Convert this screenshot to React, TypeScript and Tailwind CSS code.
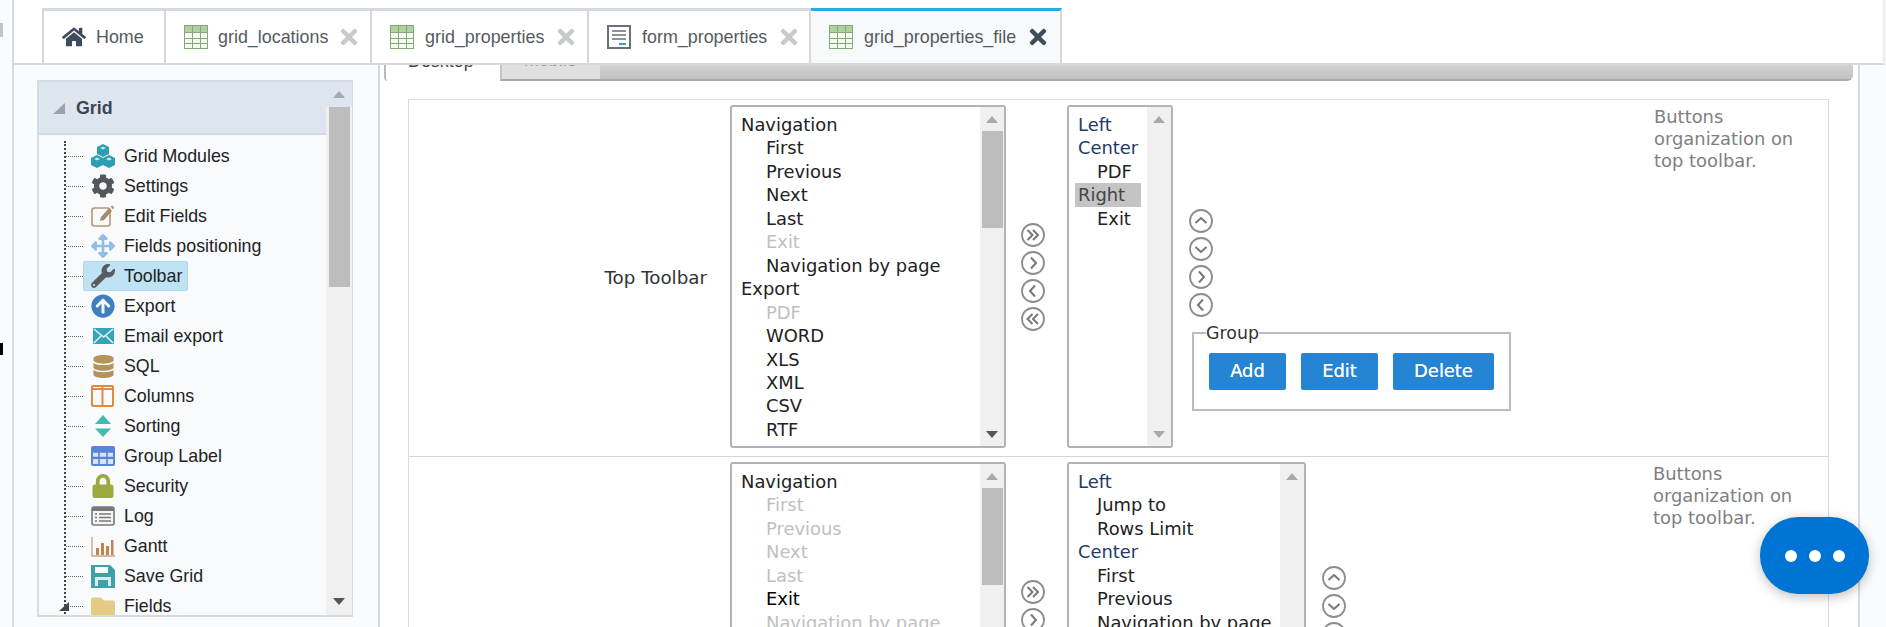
import type { ReactNode } from "react";
import {
  FaArrowCircleUp,
  FaArrowsAlt,
  FaCog,
  FaDatabase,
  FaFolder,
  FaHome,
  FaLock,
  FaTimes,
  FaWrench,
} from "react-icons/fa";

const TABLE_ICON = (
  <svg width="24" height="24" viewBox="0 0 24 24">
    <rect x="0.5" y="0.5" width="23" height="23" fill="#f6fbef" stroke="#86a97c" />
    <rect x="1" y="1" width="22" height="6" fill="#b2d09f" />
    <path d="M0 7.5h24M0 13.5h24M0 18.5h24M8.5 0v24M16.5 0v24" stroke="#86a97c" strokeWidth="1" fill="none" />
  </svg>
);

const FORM_ICON = (
  <svg width="24" height="24" viewBox="0 0 24 24">
    <rect x="1" y="1" width="22" height="22" fill="#fff" stroke="#6b7078" strokeWidth="2" />
    <path d="M5 6h14M5 10h14M5 14h14" stroke="#6b7078" strokeWidth="1.6" />
    <path d="M12 19h7" stroke="#3a9fc0" strokeWidth="2" />
  </svg>
);

const TREE_ICONS: Record<string, ReactNode> = {
  modules: (
    <svg width="24" height="24" viewBox="0 0 24 24">
      <path d="M12 0l6 3v7l-6 3-6-3V3z" fill="#2f9db1" />
      <path d="M6 11l6 3v7l-6 3-6-3v-7z" fill="#2f9db1" />
      <path d="M18 11l6 3v7l-6 3-6-3v-7z" fill="#2f9db1" />
      <path d="M12 2.5l3 1.5-3 1.5L9 4zM6 13.5l3 1.5-3 1.5L3 15zM18 13.5l3 1.5-3 1.5-3-1.5z" fill="#c5e6ea" />
    </svg>
  ),
  settings: <FaCog size={24} color="#54575b" />,
  edit: (
    <svg width="24" height="24" viewBox="0 0 24 24">
      <rect x="1" y="4" width="18" height="18" rx="2.5" fill="none" stroke="#b39672" strokeWidth="1.6" />
      <path d="M9 17l1-4 8-9 3 3-8 9z" fill="#a78a66" />
      <path d="M19.5 2.5l2-1 1.5 2-1 2z" fill="#d08a57" />
    </svg>
  ),
  move: <FaArrowsAlt size={24} color="#8fbde6" />,
  wrench: <FaWrench size={24} color="#595c61" />,
  export: <FaArrowCircleUp size={24} color="#3e7fbf" />,
  email: (
    <svg width="24" height="24" viewBox="0 0 24 24">
      <rect x="2" y="4" width="21" height="16" fill="#36a3b9" />
      <path d="M3 5l9.500 8L22 5M3 19l7-7M22 19l-7-7" stroke="#dff2f5" strokeWidth="1.5" fill="none" />
    </svg>
  ),
  sql: <FaDatabase size={23} color="#b2955b" />,
  columns: (
    <svg width="24" height="24" viewBox="0 0 24 24">
      <rect x="1" y="2" width="21" height="20" rx="1" fill="none" stroke="#e48a3f" strokeWidth="2" />
      <path d="M1 5h21" stroke="#e48a3f" strokeWidth="2" />
      <path d="M11.500 2v20" stroke="#e48a3f" strokeWidth="2" />
    </svg>
  ),
  sorting: (
    <svg width="24" height="24" viewBox="0 0 24 24">
      <path d="M12 1l8 9H4z" fill="#43bab0" />
      <path d="M12 23l8-8.500H4z" fill="#43bab0" />
    </svg>
  ),
  group: (
    <svg width="24" height="24" viewBox="0 0 24 24">
      <rect x="0" y="2" width="24" height="20" rx="2" fill="#5a82d8" />
      <path d="M2 8h20v5H2zM2 15h20v5H2z" fill="#d8e3f8" />
      <path d="M8 8v12M16 8v12M2 13.500h20M2 8h20" stroke="#5a82d8" strokeWidth="1.600" />
    </svg>
  ),
  lock: <FaLock size={24} color="#9ba93e" />,
  log: (
    <svg width="24" height="24" viewBox="0 0 24 24">
      <rect x="1" y="3" width="22" height="18" rx="2" fill="#f5f5f5" stroke="#77787b" strokeWidth="1.600" />
      <rect x="1" y="3" width="22" height="4" fill="#77787b" />
      <path d="M4 10h2M8 10h12M4 13.500h2M8 13.500h12M4 17h2M8 17h12" stroke="#77787b" strokeWidth="1.300" />
    </svg>
  ),
  gantt: (
    <svg width="24" height="24" viewBox="0 0 24 24">
      <path d="M1 3v19h23" fill="none" stroke="#c9a27e" strokeWidth="1.300" />
      <path d="M5 14h3v7H5zM10 9h3v12h-3zM15 12h3v9h-3zM20 6h2.500v15H20z" fill="#c0834d" />
    </svg>
  ),
  save: (
    <svg width="24" height="24" viewBox="0 0 24 24">
      <path d="M0 1h19l5 5v18H0z" fill="#3fa0a9" />
      <path d="M4 3h13v6H4z" fill="#f5fbfb" />
      <path d="M4 13h16v9H4z" fill="#d7edf0" />
      <path d="M7 16h10v6H7z" fill="#3fa0a9" />
    </svg>
  ),
  folder: <FaFolder size={25} color="#e4cb85" />,
};

const TREE = [
  { label: "Grid Modules", icon: "modules" },
  { label: "Settings", icon: "settings" },
  { label: "Edit Fields", icon: "edit" },
  { label: "Fields positioning", icon: "move" },
  { label: "Toolbar", icon: "wrench", selected: true },
  { label: "Export", icon: "export" },
  { label: "Email export", icon: "email" },
  { label: "SQL", icon: "sql" },
  { label: "Columns", icon: "columns" },
  { label: "Sorting", icon: "sorting" },
  { label: "Group Label", icon: "group" },
  { label: "Security", icon: "lock" },
  { label: "Log", icon: "log" },
  { label: "Gantt", icon: "gantt" },
  { label: "Save Grid", icon: "save" },
  { label: "Fields", icon: "folder" },
];

type Item = { text: string; sub?: boolean; off?: boolean; strong?: boolean };
const sub = (text: string, off = false, strong = false): Item => ({ text, sub: true, off, strong });

const TOP_AVAILABLE: Item[] = [
  { text: "Navigation" },
  sub("First"),
  sub("Previous"),
  sub("Next"),
  sub("Last"),
  sub("Exit", true),
  sub("Navigation by page"),
  { text: "Export" },
  sub("PDF", true),
  sub("WORD"),
  sub("XLS"),
  sub("XML"),
  sub("CSV"),
  sub("RTF"),
];

const BOTTOM_AVAILABLE: Item[] = [
  { text: "Navigation" },
  sub("First", true),
  sub("Previous", true),
  sub("Next", true),
  sub("Last", true),
  sub("Exit", false, true),
  sub("Navigation by page", true),
];

function Arrow({ dir, color = "#a0a4a8" }: { dir: "up" | "down"; color?: string }) {
  return (
    <svg width="12" height="7" viewBox="0 0 12 7">
      <path d={dir === "up" ? "M6 0l6 7H0z" : "M0 0h12L6 7z"} fill={color} />
    </svg>
  );
}

function ListBox({ width, items, thumb, children }: {
  width: string;
  items?: Item[];
  thumb?: boolean;
  children?: ReactNode;
}) {
  return (
    <div className={`${width} h-[343px] shrink-0 flex rounded-[3px] border-2 border-[#b0b4ba] bg-white overflow-hidden`}>
      <div className="flex-1 pt-[6px] pl-[9px] text-[17.9px] leading-[23.45px] text-[#222] whitespace-nowrap overflow-hidden">
        {items?.map((it) => (
          <div key={it.text} className={`${it.sub ? "pl-[25px]" : ""} ${it.off ? "text-[#c0c0c0]" : ""} ${it.strong ? "text-black" : ""}`}>
            {it.text}
          </div>
        ))}
        {children}
      </div>
      <div className="w-[24px] shrink-0 bg-[#f0f0f0] flex flex-col items-center">
        <div className="h-[24px] flex items-center justify-center"><Arrow dir="up" color="#a9a9a9" /></div>
        <div className="flex-1 w-[21px]">
          {thumb && <div className="h-[97px] bg-[#bdbdbd]" />}
        </div>
        <div className="h-[24px] flex items-center justify-center"><Arrow dir="down" color={thumb ? "#555" : "#a9a9a9"} /></div>
      </div>
    </div>
  );
}

const CHEVRONS = {
  up: "M6.500 14l5.500-5 5.500 5",
  down: "M6.500 10l5.500 5 5.500-5",
  right: "M10 6.500l5 5.500-5 5.500",
  left: "M14 6.500l-5 5.500 5 5.500",
  rightAll: "M6.500 7l5 5-5 5M12 7l5 5-5 5",
  leftAll: "M11.500 7l-5 5 5 5M17 7l-5 5 5 5",
};

function RoundButton({ kind }: { kind: keyof typeof CHEVRONS }) {
  return (
    <svg width="24" height="24" viewBox="0 0 24 24" className="block">
      <circle cx="12" cy="12" r="11" fill="#fff" stroke="#8c8c8c" strokeWidth="1.800" />
      <path d={CHEVRONS[kind]} fill="none" stroke="#777" strokeWidth="2" />
    </svg>
  );
}

function TransferButtons() {
  return (
    <div className="ml-[15px] mr-[22px] mt-[118px] flex flex-col gap-[4px] shrink-0">
      <RoundButton kind="rightAll" />
      <RoundButton kind="right" />
      <RoundButton kind="left" />
      <RoundButton kind="leftAll" />
    </div>
  );
}

function OrderButtons() {
  return (
    <div className="flex flex-col gap-[4px] w-[24px]">
      <RoundButton kind="up" />
      <RoundButton kind="down" />
      <RoundButton kind="right" />
      <RoundButton kind="left" />
    </div>
  );
}

function Help() {
  return (
    <div className="w-[150px] shrink-0 mt-[1px] text-[#808080] text-[17.9px] leading-[22px]">
      Buttons organization on top toolbar.
    </div>
  );
}

function Tab({ icon, label, w, active, closable = true, gap = "gap-[11px]" }: {
  icon: ReactNode;
  label: string;
  w: string;
  active?: boolean;
  closable?: boolean;
  gap?: string;
}) {
  return (
    <div className={`${w} h-full shrink-0 flex items-center pl-[18px] ${gap} border-t-[3px] border-r-2 ${active ? "border-t-[#29abe2] border-r-[#d5d9de] bg-[#f7f9fb]" : "border-t-[#d5d9de] border-r-[#d5d9de]"}`}>
      {icon}
      <span className="text-[17.9px] text-[#555a60] whitespace-nowrap">{label}</span>
      {closable && <FaTimes size={24} color={active ? "#3e4c5c" : "#c6cacd"} className="-ml-[1px]" />}
    </div>
  );
}

export default function App() {
  return (
    <div className="relative w-[1886px] h-[627px] overflow-hidden flex bg-[#f9fbfd] font-['Liberation_Sans',Arial,sans-serif]">
      {/* collapsed side menu */}
      <div className="w-[14px] shrink-0 border-r-2 border-[#d5dbe2] flex flex-col">
        <div className="mt-[23px] h-[14px] w-[3px] bg-[#c4c4c4]" />
        <div className="mt-[306px] h-[12px] w-[3px] bg-black" />
      </div>

      <div className="flex-1 min-w-0 flex flex-col">
        <div className="h-[65px] shrink-0 bg-white border-b-2 border-[#d5d9de] pt-[8px] pl-[28px] mr-[1px] border-r-2 border-r-[#eceef0] flex">
          <div className="flex h-[55px] border-l-2 border-[#d5d9de]">
            <Tab icon={<FaHome size={24} color="#3e4c5c" />} label="Home" w="w-[122px]" closable={false} gap="gap-[10px]" />
            <Tab icon={TABLE_ICON} label="grid_locations" w="w-[206px]" gap="gap-[10px]" />
            <Tab icon={TABLE_ICON} label="grid_properties" w="w-[217px]" />
            <Tab icon={FORM_ICON} label="form_properties" w="w-[222px]" />
            <Tab icon={TABLE_ICON} label="grid_properties_file" w="w-[251px]" active />
          </div>
        </div>

        <div className="flex-1 min-h-0 flex">
          {/* application tree */}
          <div className="w-[364px] shrink-0 pl-[23px] pt-[15px]">
            <div className="relative w-[316px] h-[537px] flex border-l-2 border-y-2 border-r border-[#d5dbe2] overflow-hidden">
              <div className="flex-1 bg-[#f8fafc] flex flex-col">
                <div className="h-[53px] shrink-0 bg-[#dde5ee] border-b-2 border-[#d0dae4] flex items-center pl-[14px] pt-[2px]">
                  <svg width="12" height="11" viewBox="0 0 12 11"><path d="M12 0v11H0z" fill="#97a3b0" /></svg>
                  <span className="ml-[11px] text-[17.8px] font-bold text-[#3a4654]">Grid</span>
                </div>
                <div className="ml-[25px] mt-[6px] flex-1 border-l-2 border-dotted border-[#444]">
                  {TREE.map((row) => (
                    <div key={row.label} className="h-[30px] flex items-center">
                      <div className="w-[17px] border-t border-dotted border-[#666] shrink-0" />
                      <div className={`flex items-center h-[30px] rounded-[2px] border pl-[7px] pr-[5px] gap-[9px] ${row.selected ? "bg-[#bfe3f5] border-[#aed6ea]" : "border-transparent"}`}>
                        <span className="w-[24px] h-[24px] flex items-center justify-center shrink-0">{TREE_ICONS[row.icon]}</span>
                        <span className="text-[17.8px] text-[#222] whitespace-nowrap">{row.label}</span>
                      </div>
                    </div>
                  ))}
                </div>
              </div>
              <div className="w-[26px] shrink-0 bg-[#f0f0f0] flex flex-col items-start">
                <div className="h-[25px] bg-[#dde5ee] w-full flex items-center justify-center"><Arrow dir="up" color="#a5a9ad" /></div>
                <div className="ml-[3px] w-[21px] h-[180px] bg-[#bdbdbd]" />
                <div className="mt-auto mb-[10px] self-center"><Arrow dir="down" color="#555" /></div>
              </div>
              <svg width="10" height="9" viewBox="0 0 10 9" className="absolute left-[20px] bottom-[4px]"><path d="M10 0v9H0z" fill="#444" /></svg>
            </div>
          </div>

          {/* toolbar settings */}
          <div className="w-[1482px] shrink-0 bg-white border-x-2 border-[#d5dbe2] flex flex-col overflow-hidden">
            <div className="h-[16px] shrink-0 ml-[4px] mr-[5px] flex rounded-br-[6px] overflow-hidden">
              <div className="w-[116px] bg-white border-l-2 border-[#b9b9b9] rounded-bl-[4px] pl-[22px] overflow-hidden">
                <div className="-mt-[15px] text-[17.9px] leading-[22px] text-[#444]">Desktop</div>
              </div>
              <div className="w-[100px] bg-[#e0e0e0] border-l-2 border-b-2 border-l-[#c4c4c4] border-b-[#a9a9a9] pl-[22px] overflow-hidden">
                <div className="-mt-[16px] text-[17.9px] leading-[22px] text-[#9a9a9a]">Mobile</div>
              </div>
              <div className="flex-1 bg-linear-to-b from-[#d2d2d2] to-[#c2c2c2] border-b-2 border-[#a9a9a9]" />
            </div>

            <div className="ml-[28px] mt-[18px] w-[1421px] border border-[#dcdcdc] shrink-0 font-['DejaVu_Sans',Verdana,sans-serif]">
              <div className="flex pt-[5px] pb-[8px] border-b border-[#d5d5d5]">
                <div className="w-[298px] shrink-0 mr-[22px] mt-[162px] text-right text-[#333] text-[18.3px] leading-[22px]">Top Toolbar</div>
                <div className="w-px shrink-0" />
                <ListBox width="w-[276px]" items={TOP_AVAILABLE} thumb />
                <TransferButtons />
                <ListBox width="w-[106px]">
                  <div className="text-[#1f3a68]">Left</div>
                  <div className="text-[#1f3a68]">Center</div>
                  <div className="pl-[19px] text-[#222]">PDF</div>
                  <div className="-ml-[3px] w-[66px] pl-[3px] bg-[#c4c4c4] text-[#444]">Right</div>
                  <div className="pl-[19px] text-[#222]">Exit</div>
                </ListBox>
                <div className="ml-[16px] mt-[104px] w-[322px] shrink-0 flex flex-col">
                  <OrderButtons />
                  <fieldset className="ml-[3px] mt-[10px] w-[319px] h-[84px] border-2 border-[#bcbcbc] px-[15px] flex gap-[15px]">
                    <legend className="ml-[-3px] text-[17.4px] leading-[12px] text-[#333]">Group</legend>
                    <button className="mt-[14px] w-[77px] h-[37px] rounded-[2px] bg-[#2684d4] text-white text-[17.9px] [text-shadow:0_0_0.5px_#fff]">Add</button>
                    <button className="mt-[14px] w-[77px] h-[37px] rounded-[2px] bg-[#2684d4] text-white text-[17.9px] [text-shadow:0_0_0.5px_#fff]">Edit</button>
                    <button className="mt-[14px] w-[101px] h-[37px] rounded-[2px] bg-[#2684d4] text-white text-[17.9px] [text-shadow:0_0_0.5px_#fff]">Delete</button>
                  </fieldset>
                </div>
                <div className="ml-[143px]"><Help /></div>
              </div>

              <div className="flex pt-[5px]">
                <div className="w-[298px] shrink-0 mr-[23px]" />
                <ListBox width="w-[276px]" items={BOTTOM_AVAILABLE} thumb />
                <TransferButtons />
                <ListBox width="w-[239px]">
                  <div className="text-[#1f3a68]">Left</div>
                  <div className="pl-[19px] text-[#222]">Jump to</div>
                  <div className="pl-[19px] text-[#222]">Rows Limit</div>
                  <div className="text-[#1f3a68]">Center</div>
                  <div className="pl-[19px] text-[#222]">First</div>
                  <div className="pl-[19px] text-[#222]">Previous</div>
                  <div className="pl-[19px] text-[#222]">Navigation by page</div>
                </ListBox>
                <div className="ml-[16px] mt-[104px]"><OrderButtons /></div>
                <div className="ml-[307px]"><Help /></div>
              </div>
            </div>
          </div>
        </div>
      </div>

      <button className="absolute left-[1760px] top-[517px] w-[109px] h-[77px] rounded-[38px] bg-[#0074d4] shadow-[0_3px_12px_rgba(0,0,0,0.25)] flex items-center justify-center gap-[12px]">
        <span className="w-[12px] h-[12px] rounded-full bg-white" />
        <span className="w-[12px] h-[12px] rounded-full bg-white" />
        <span className="w-[12px] h-[12px] rounded-full bg-white" />
      </button>
    </div>
  );
}
